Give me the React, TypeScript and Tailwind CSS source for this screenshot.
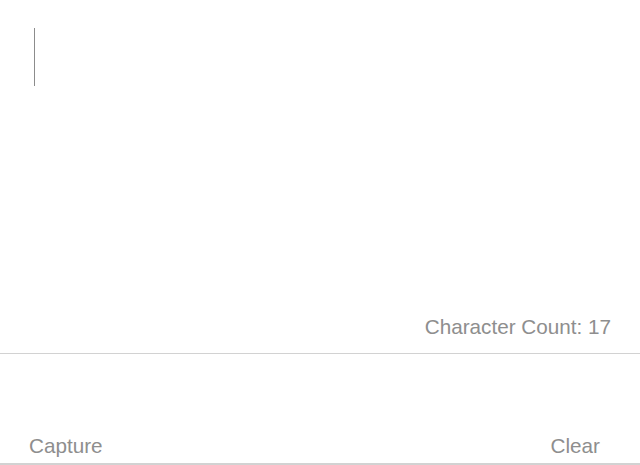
import React from 'react';

const App: React.FC = () => {
  const text = '';
  const count = 17;

  return (
    <div
      className="w-[640px] h-[465px] bg-white flex flex-col text-[#8e8e8e] text-[20.7px] leading-[24px]"
      style={{ fontFamily: '"Liberation Sans", Arial, sans-serif' }}
    >
      <div className="h-[354px] flex flex-col border-b border-[#d2d2d2]">
        <div className="mt-[28px] ml-[34px] w-px h-[58px] bg-[#8c8c8c]">{text}</div>
        <div className="flex-1" />
        <div className="flex justify-end pr-[29px] pb-[14px]">
          <span>Character Count: {count}</span>
        </div>
      </div>
      <div className="flex-1 flex items-end justify-between px-[29px] pb-[5px] border-b-2 border-[#d2d2d2]">
        <button className="text-[#8e8e8e]">Capture</button>
        <button className="text-[#8e8e8e] mr-[11px]">Clear</button>
      </div>
    </div>
  );
};

export default App;
